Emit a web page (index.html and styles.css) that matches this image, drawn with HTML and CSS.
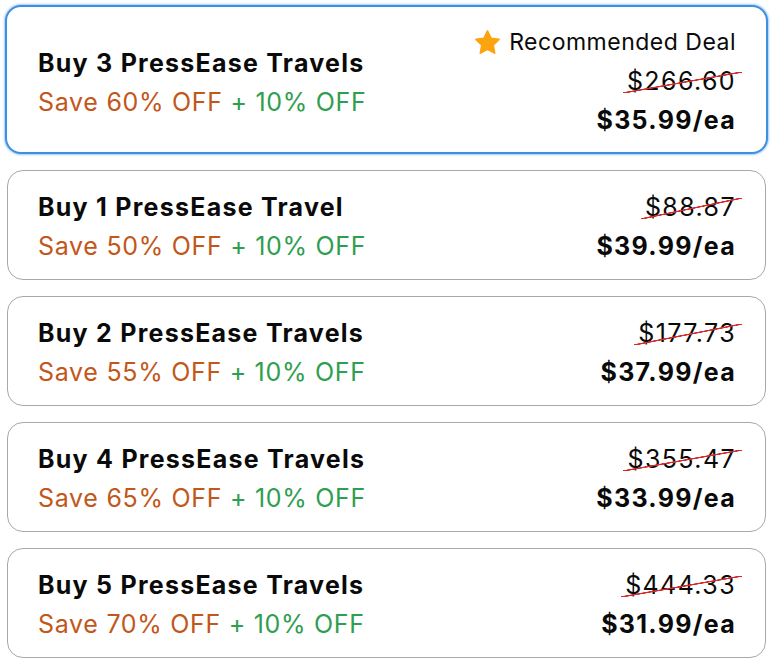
FILE: index.html
```html
<!DOCTYPE html>
<html lang="en">
<head>
<meta charset="utf-8">
<title>PressEase Travel bundles</title>
<link rel="stylesheet" href="styles.css">
</head>
<body>
<div class="offers">
  <div class="offer selected">
    <div class="info">
      <div class="title">Buy 3 PressEase Travels</div>
      <div class="save"><span class="pct">Save 60% OFF</span> <span class="extra">+ 10% OFF</span></div>
    </div>
    <div class="prices">
      <div class="badge"><svg class="star" viewBox="0 0 24 24" width="27" height="27"><path d="M12 1.8l3.1 6.6 7.1.9-5.2 5 1.3 7.1L12 18l-6.3 3.4 1.3-7.1-5.2-5 7.1-.9z" fill="#fca40f" stroke="#fca40f" stroke-width="1.6" stroke-linejoin="round"/></svg><span>Recommended Deal</span></div>
      <div class="old"><span class="strike">$266.60</span></div>
      <div class="now">$35.99/ea</div>
    </div>
  </div>
  <div class="offer">
    <div class="info">
      <div class="title">Buy 1 PressEase Travel</div>
      <div class="save"><span class="pct">Save 50% OFF</span> <span class="extra">+ 10% OFF</span></div>
    </div>
    <div class="prices">
      <div class="old"><span class="strike">$88.87</span></div>
      <div class="now">$39.99/ea</div>
    </div>
  </div>
  <div class="offer">
    <div class="info">
      <div class="title">Buy 2 PressEase Travels</div>
      <div class="save"><span class="pct">Save 55% OFF</span> <span class="extra">+ 10% OFF</span></div>
    </div>
    <div class="prices">
      <div class="old"><span class="strike">$177.73</span></div>
      <div class="now">$37.99/ea</div>
    </div>
  </div>
  <div class="offer">
    <div class="info">
      <div class="title">Buy 4 PressEase Travels</div>
      <div class="save"><span class="pct">Save 65% OFF</span> <span class="extra">+ 10% OFF</span></div>
    </div>
    <div class="prices">
      <div class="old"><span class="strike">$355.47</span></div>
      <div class="now">$33.99/ea</div>
    </div>
  </div>
  <div class="offer">
    <div class="info">
      <div class="title">Buy 5 PressEase Travels</div>
      <div class="save"><span class="pct">Save 70% OFF</span> <span class="extra">+ 10% OFF</span></div>
    </div>
    <div class="prices">
      <div class="old"><span class="strike">$444.33</span></div>
      <div class="now">$31.99/ea</div>
    </div>
  </div>
</div>
</body>
</html>
```

FILE: styles.css
```css
html, body {
  margin: 0;
  padding: 0;
  background: #ffffff;
}
body {
  font-family: Inter, "Noto Sans", sans-serif;
  color: #0a0a0a;
}
.offers {
  display: flex;
  flex-direction: column;
  gap: 16px;
  padding: 5px 5px 0 7px;
}
.offer {
  display: flex;
  justify-content: space-between;
  align-items: center;
  height: 110px;
  box-sizing: border-box;
  padding: 3px 29px 0 30px;
  border: 1px solid #a8a8a8;
  border-radius: 16px;
  background: #fff;
}
.offer.selected {
  height: 149px;
  margin-left: -2px;
  margin-right: -2px;
  padding: 3px 30px 0 31px;
  border: 2px solid #3d8fe0;
  box-shadow: 0 0 2px 1px rgba(90, 160, 235, 0.55);
}
.offer.selected .info {
  padding-top: 3px;
}
.info, .prices {
  display: flex;
  flex-direction: column;
}
.prices {
  align-items: flex-end;
}
.title {
  font-size: 25px;
  font-weight: 700;
  letter-spacing: 1.25px;
  line-height: 39px;
}
.save {
  font-size: 25px;
  letter-spacing: 0.7px;
  line-height: 39px;
}
.pct { color: #c2571a; }
.extra { color: #2f9e4f; }
.badge {
  display: flex;
  align-items: center;
  gap: 8px;
  font-size: 23px;
  letter-spacing: 0.5px;
  line-height: 39px;
}
.star { display: block; }
.old {
  font-size: 25px;
  line-height: 39px;
  letter-spacing: 1.4px;
}
.strike {
  position: relative;
  display: inline-block;
}
.strike::after {
  content: "";
  position: absolute;
  left: -4px;
  right: -6px;
  top: 10px;
  bottom: 8px;
  background: linear-gradient(to bottom right, transparent calc(50% - 1px), #d42a2a calc(50% - 0.5px), #d42a2a calc(50% + 0.5px), transparent calc(50% + 1px));
}
.now {
  font-size: 25px;
  font-weight: 700;
  letter-spacing: 1.3px;
  line-height: 39px;
}
```
